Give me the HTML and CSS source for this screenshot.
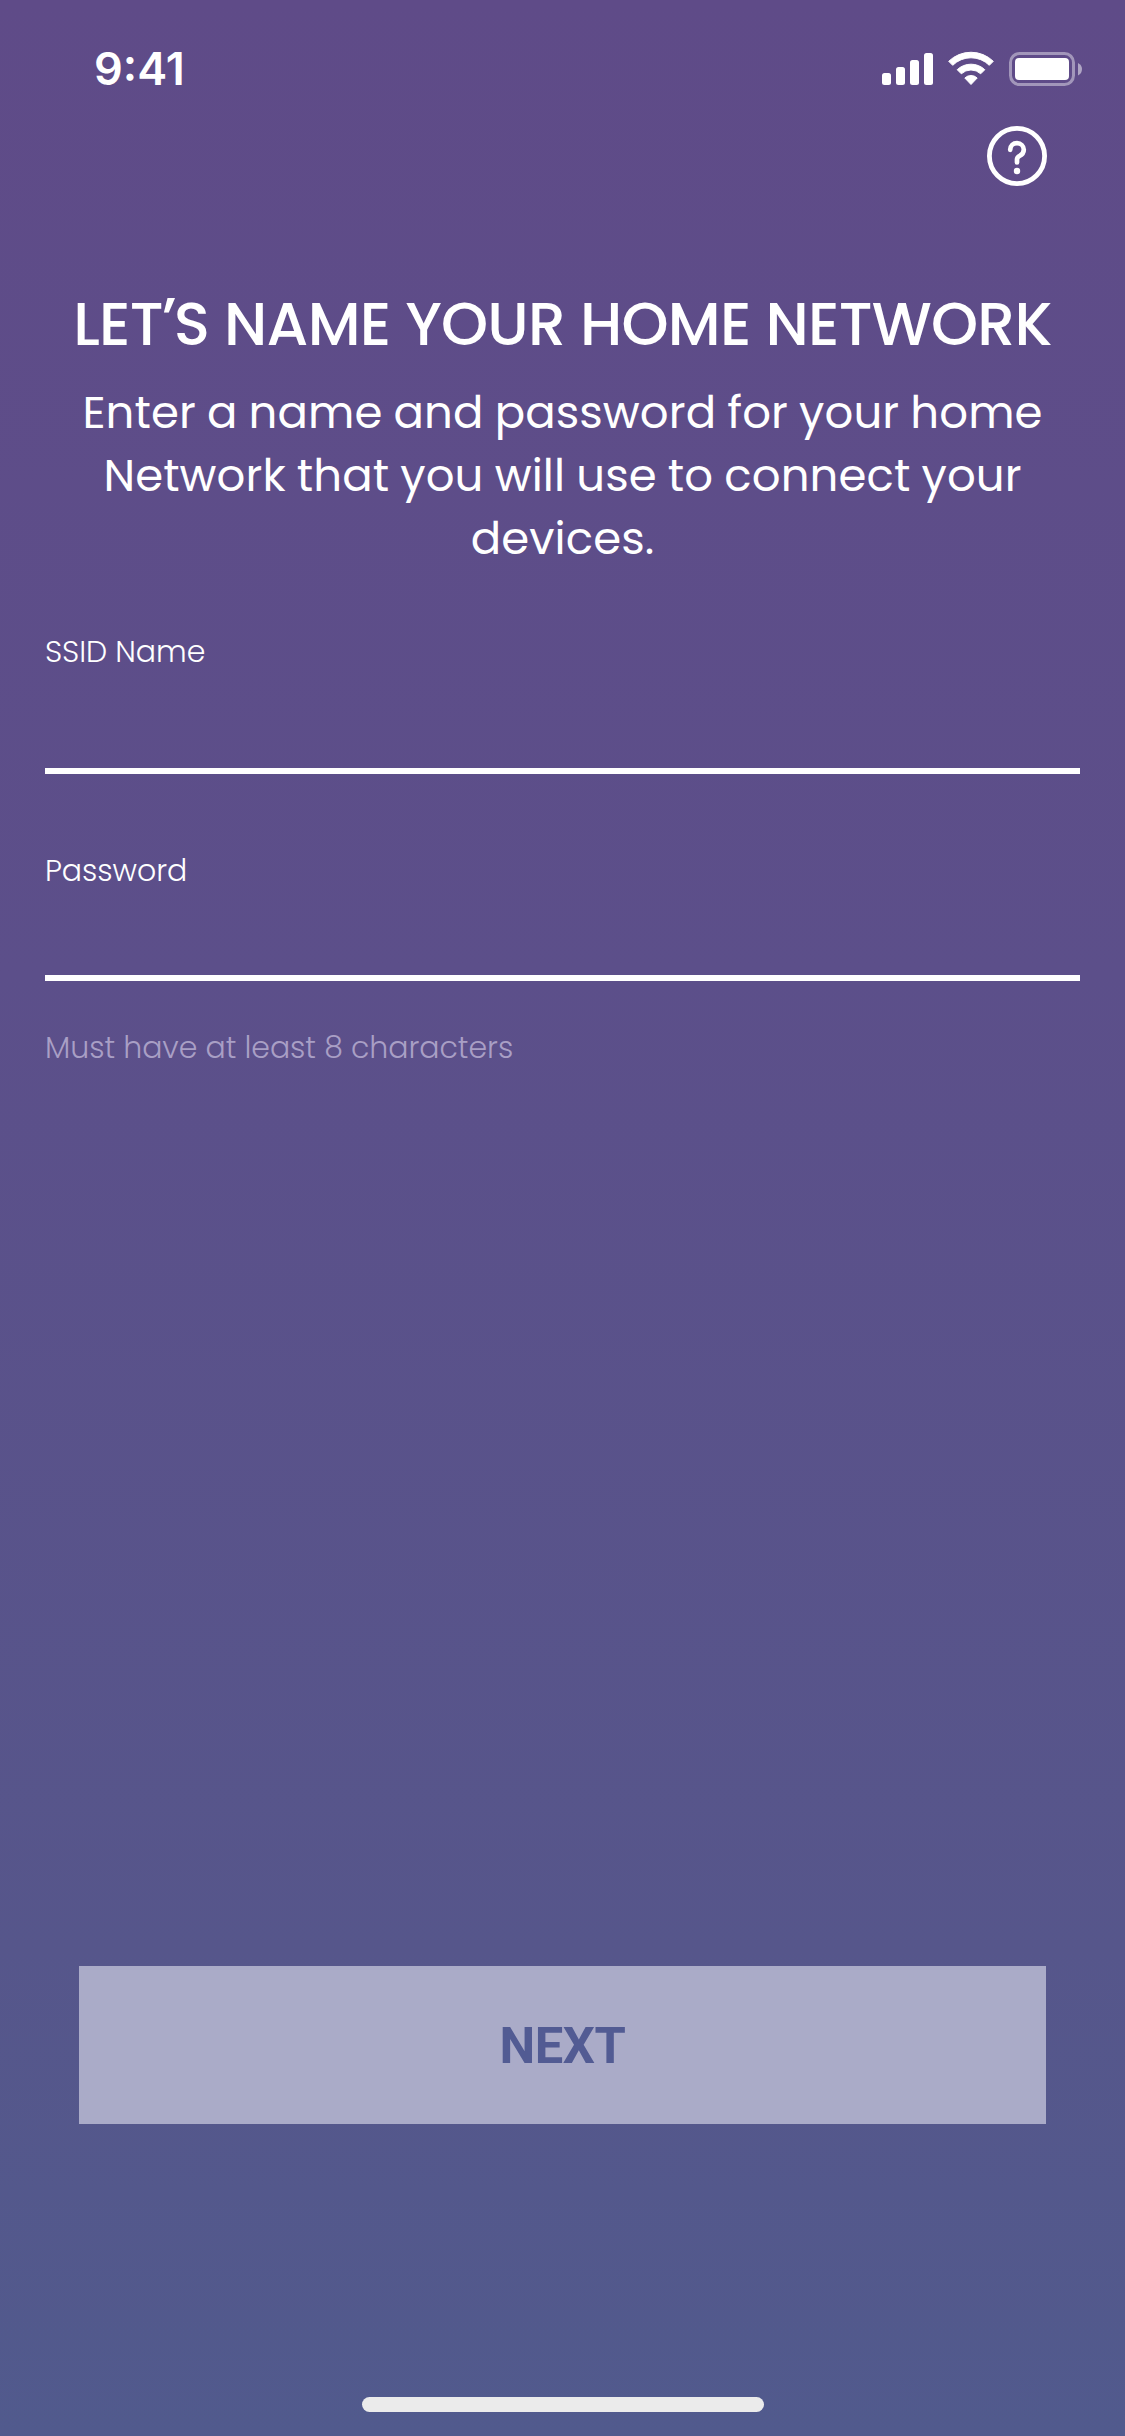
FILE: index.html
```html
<!DOCTYPE html>
<html lang="en">
<head>
<meta charset="utf-8">
<title>Home Network</title>
<link rel="stylesheet" href="styles.css">
</head>
<body>
<div class="screen">
  <header class="status">
    <span class="time">9:41</span>
    <svg class="status-icons" width="201" height="36" viewBox="0 0 201 36" fill="#fff">
      <rect x="0" y="22" width="9" height="12" rx="2.5"/>
      <rect x="14" y="16" width="9" height="18" rx="2.5"/>
      <rect x="28" y="9" width="9" height="25" rx="2.5"/>
      <rect x="42" y="2" width="9" height="32" rx="2.5"/>
      <path d="M66.700 10.300 A32 32 0 0 1 111.300 10.300 L107.300 14.300 A26 26 0 0 0 70.700 14.300 Z" stroke="#fff" stroke-width="1" stroke-linejoin="round"/>
      <path d="M75.200 18.700 A20 20 0 0 1 102.800 18.700 L98.700 22.800 A14.200 14.200 0 0 0 79.300 22.800 Z" stroke="#fff" stroke-width="1" stroke-linejoin="round"/>
      <path d="M82.800 27 A9 9 0 0 1 95.200 27 L89 33.500 Z" stroke="#fff" stroke-width="1" stroke-linejoin="round"/>
      <rect x="128.500" y="2.500" width="63" height="31" rx="9" fill="none" stroke="#fff" stroke-opacity=".42" stroke-width="3"/>
      <rect x="133" y="7" width="54" height="22" rx="4"/>
      <path d="M196 12 Q200 14 200 18 Q200 22.500 196 24.500 Z" fill-opacity=".5"/>
    </svg>
  </header>
  <nav class="toolbar">
    <button class="help" aria-label="Help">
      <svg width="60" height="60" viewBox="0 0 60 60" fill="none" stroke="#fff">
        <circle cx="30" cy="30" r="27.600" stroke-width="4.800"/>
        <path d="M23.200 23.800 C23.200 19.800 26.200 17.200 30 17.200 C33.800 17.200 36.800 20 36.800 23.800 C36.800 27 35 28.700 32.500 30 Q30 31.300 30 33.600 V36.400" stroke-width="4.700" stroke-linecap="round" stroke-linejoin="round"/>
        <circle cx="30" cy="45" r="3.200" fill="#fff" stroke="none"/>
      </svg>
    </button>
  </nav>
  <main class="content">
    <h1 class="title">LET<span class="apostrophe">’</span>S NAME YOUR HOME NETWORK</h1>
    <p class="intro">Enter a name and password for your home<br>Network that you will use to connect your<br>devices.</p>
    <div class="field field-ssid"><span class="label">SSID Name</span></div>
    <div class="field field-password"><span class="label">Password</span></div>
    <p class="hint">Must have at least 8 characters</p>
  </main>
  <button class="next">NEXT</button>
  <div class="home-bar"></div>
</div>
</body>
</html>
```
FILE: styles.css
```css
* { box-sizing: border-box; margin: 0; }
body { margin: 0; }
button { border: 0; padding: 0; background: none; }
svg { display: block; }

.screen {
  display: flex;
  flex-direction: column;
  width: 1125px;
  height: 2436px;
  padding-bottom: 24px;
  overflow: hidden;
  color: #fff;
  font-family: Poppins, Inter, sans-serif;
  background: linear-gradient(#5f4b88, #5c4f8a 40%, #56568b 80%, #515a8d);
}
.status {
  display: flex;
  justify-content: space-between;
  padding: 43px 42px 0 94px;
  height: 126px;
}
.time {
  font: 600 45px/52px Inter, sans-serif;
  letter-spacing: 0;
}
.status-icons { margin-top: 8px; }
.toolbar {
  display: flex;
  justify-content: flex-end;
  height: 165px;
  padding-right: 78px;
}
.help { width: 60px; height: 60px; }
.content { flex: 1; padding: 0 45px; }
.title {
  height: 66px;
  font-size: 60px;
  line-height: 66px;
  font-weight: 500;
  text-align: center;
  white-space: nowrap;
  letter-spacing: -0.740px;
}
.apostrophe {
  display: inline-block;
  margin: 0 -2px 0 -1px;
  line-height: 1;
  transform: translateY(-5px);
}
.intro {
  margin-top: 24px;
  height: 250px;
  font-size: 45px;
  line-height: 63px;
  letter-spacing: 0.100px;
  word-spacing: -1px;
  text-align: center;
  white-space: nowrap;
}
.field { border-bottom: 6px solid #fff; }
.field-ssid { height: 143px; padding-top: 1px; }
.field-password { height: 207px; padding-top: 77px; }
.label, .hint {
  display: block;
  font-size: 30px;
  line-height: 40px;
  font-weight: 300;
  letter-spacing: -0.050px;
}
.hint { margin-top: 47px; color: #a99fc5; }
.next {
  width: 967px;
  height: 158px;
  margin: 0 79px 273px;
  padding-top: 2px;
  color: #525b93;
  background: #aaabc8;
  font: 700 50.600px/58px Roboto, sans-serif;
  letter-spacing: -0.400px;
}
.home-bar {
  width: 402px;
  height: 15px;
  margin-left: 362px;
  border-radius: 8px;
  background: #ebebeb;
}
```
